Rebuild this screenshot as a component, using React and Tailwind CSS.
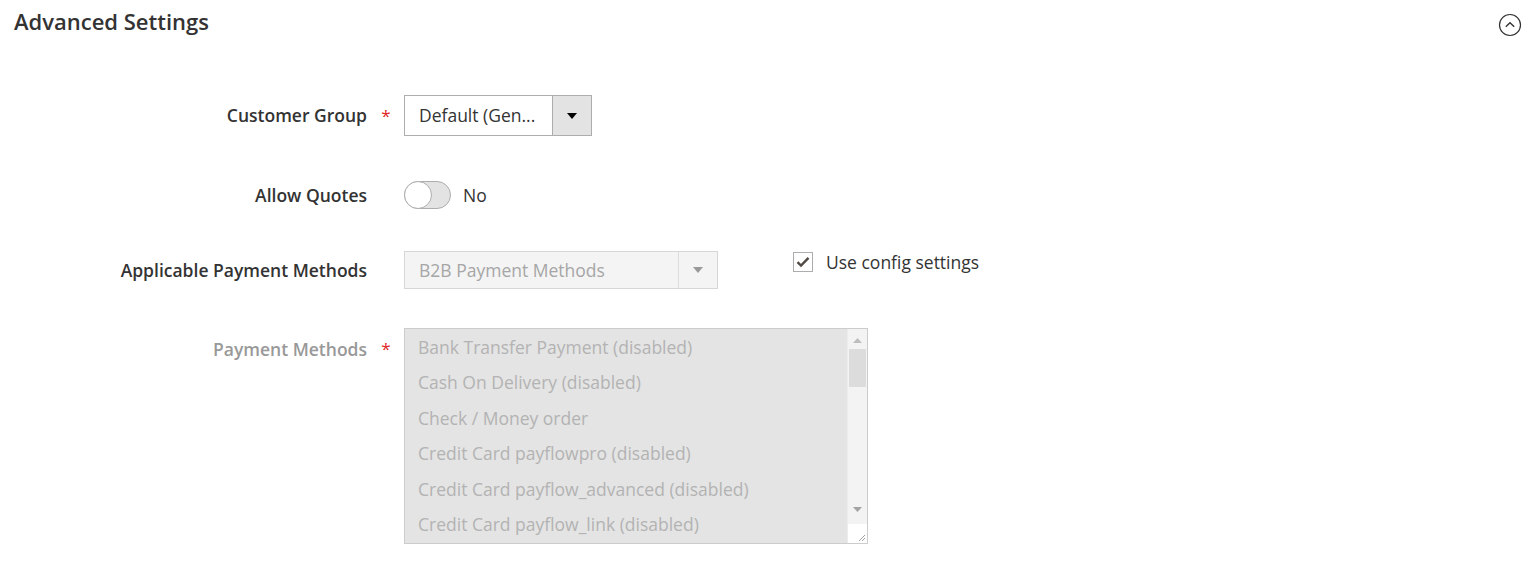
import React from "react";

const items = [
  "Bank Transfer Payment (disabled)",
  "Cash On Delivery (disabled)",
  "Check / Money order",
  "Credit Card payflowpro (disabled)",
  "Credit Card payflow_advanced (disabled)",
  "Credit Card payflow_link (disabled)",
];

function Row({ label, required, labelClass = "text-[#333]", children, className = "" }) {
  return (
    <div className={`flex items-center ${className}`}>
      <div className={`w-[367px] shrink-0 text-right text-[17.5px] font-semibold ${labelClass}`}>{label}</div>
      <div className="w-[37px] shrink-0 text-center text-[#e22626] text-[17px] pl-[1px]">{required ? "*" : ""}</div>
      {children}
    </div>
  );
}

export default function App() {
  return (
    <div className="w-full h-[565px] bg-white text-[#333] overflow-hidden" style={{ fontFamily: '"Open Sans", sans-serif' }}>
      <div className="flex items-start justify-between pl-[14px] pr-[14px] pt-[6px]">
        <h2 className="text-[22px] leading-[30px] font-semibold text-[#333]">Advanced Settings</h2>
        <svg width="24" height="24" viewBox="0 0 24 24" className="mt-[7px]">
          <circle cx="12" cy="12" r="10.5" fill="none" stroke="#333" strokeWidth="1.2" />
          <path d="M7.8 13.8 L12 9.8 L16.2 13.8" fill="none" stroke="#333" strokeWidth="1.4" />
        </svg>
      </div>

      <div className="mt-[58px]">
        <Row label="Customer Group" required className="h-[41px]">
          <div className="flex h-[41px] w-[188px] border border-[#adadad] bg-white">
            <div className="flex-1 flex items-center pl-[14px] text-[17.5px] text-[#333]">Default (Gen...</div>
            <div className="w-[39px] flex items-center justify-center bg-[#e3e3e3] border-l border-[#adadad]">
              <svg width="10" height="6" viewBox="0 0 10 6"><path d="M0 0 H10 L5 6 Z" fill="#000" /></svg>
            </div>
          </div>
        </Row>

        <Row label="Allow Quotes" className="h-[28px] mt-[45px]">
          <div className="relative h-[28px] w-[47px] rounded-full border border-[#adadad] bg-[#e3e3e3]">
            <div className="absolute left-[-1px] top-[-1px] h-[28px] w-[28px] rounded-full border border-[#adadad] bg-white" />
          </div>
          <span className="ml-[12px] text-[17.5px] text-[#333]">No</span>
        </Row>

        <Row label="Applicable Payment Methods" className="h-[38px] mt-[42px]">
          <div className="flex h-[38px] w-[314px] border border-[#d6d6d6] bg-[#f4f4f4]">
            <div className="flex-1 flex items-center pl-[14px] text-[17.5px] text-[#a6a6a6]">B2B Payment Methods</div>
            <div className="w-[39px] flex items-center justify-center border-l border-[#dcdcdc]">
              <svg width="10" height="6" viewBox="0 0 10 6"><path d="M0 0 H10 L5 6 Z" fill="#999" /></svg>
            </div>
          </div>
          <div className="ml-[75px] self-start mt-[1px] h-[20px] flex items-center">
            <div className="h-[20px] w-[20px] border border-[#adadad] bg-white flex items-center justify-center">
              <svg width="14" height="12" viewBox="0 0 14 12"><path d="M1.5 6.2 L5 9.5 L12.5 1.8" fill="none" stroke="#514943" strokeWidth="2.4" /></svg>
            </div>
            <span className="ml-[13px] text-[17.5px] text-[#333]">Use config settings</span>
          </div>
        </Row>

        <div className="flex items-start mt-[39px]">
          <div className="w-[367px] shrink-0 text-right text-[17.5px] font-semibold text-[#999] h-[36px] leading-[36px] mt-[3px]">Payment Methods</div>
          <div className="w-[37px] shrink-0 text-center text-[#e22626] text-[17px] h-[36px] leading-[36px] mt-[3px] pl-[1px]">*</div>
          <div className="relative flex h-[216px] w-[464px] border border-[#cccccc] bg-[#e4e4e4]">
            <div className="flex-1 overflow-hidden">
              {items.map((t) => (
                <div key={t} className="h-[35.5px] flex items-center pl-[13px] text-[17.5px] text-[#b3b3b3] whitespace-nowrap">{t}</div>
              ))}
            </div>
            <div className="relative w-[20px] bg-[#f3f3f3] border-l border-[#ececec]">
              <svg className="absolute left-[5px] top-[9px]" width="9" height="5" viewBox="0 0 9 5"><path d="M0 5 H9 L4.5 0 Z" fill="#bdbdbd" /></svg>
              <div className="absolute left-[1px] top-[20px] h-[38px] w-[17px] bg-[#dcdcdc]" />
              <svg className="absolute left-[5px] top-[178px]" width="9" height="5" viewBox="0 0 9 5"><path d="M0 0 H9 L4.5 5 Z" fill="#a3a3a3" /></svg>
              <div className="absolute left-0 bottom-0 w-[19px] h-[19px] bg-white" />
              <svg className="absolute right-[1px] bottom-[1px]" width="8" height="8" viewBox="0 0 8 8"><path d="M7 1 L1 7 M7 4 L4 7" stroke="#a0a0a0" strokeWidth="1" /></svg>
            </div>
          </div>
        </div>
      </div>
    </div>
  );
}
